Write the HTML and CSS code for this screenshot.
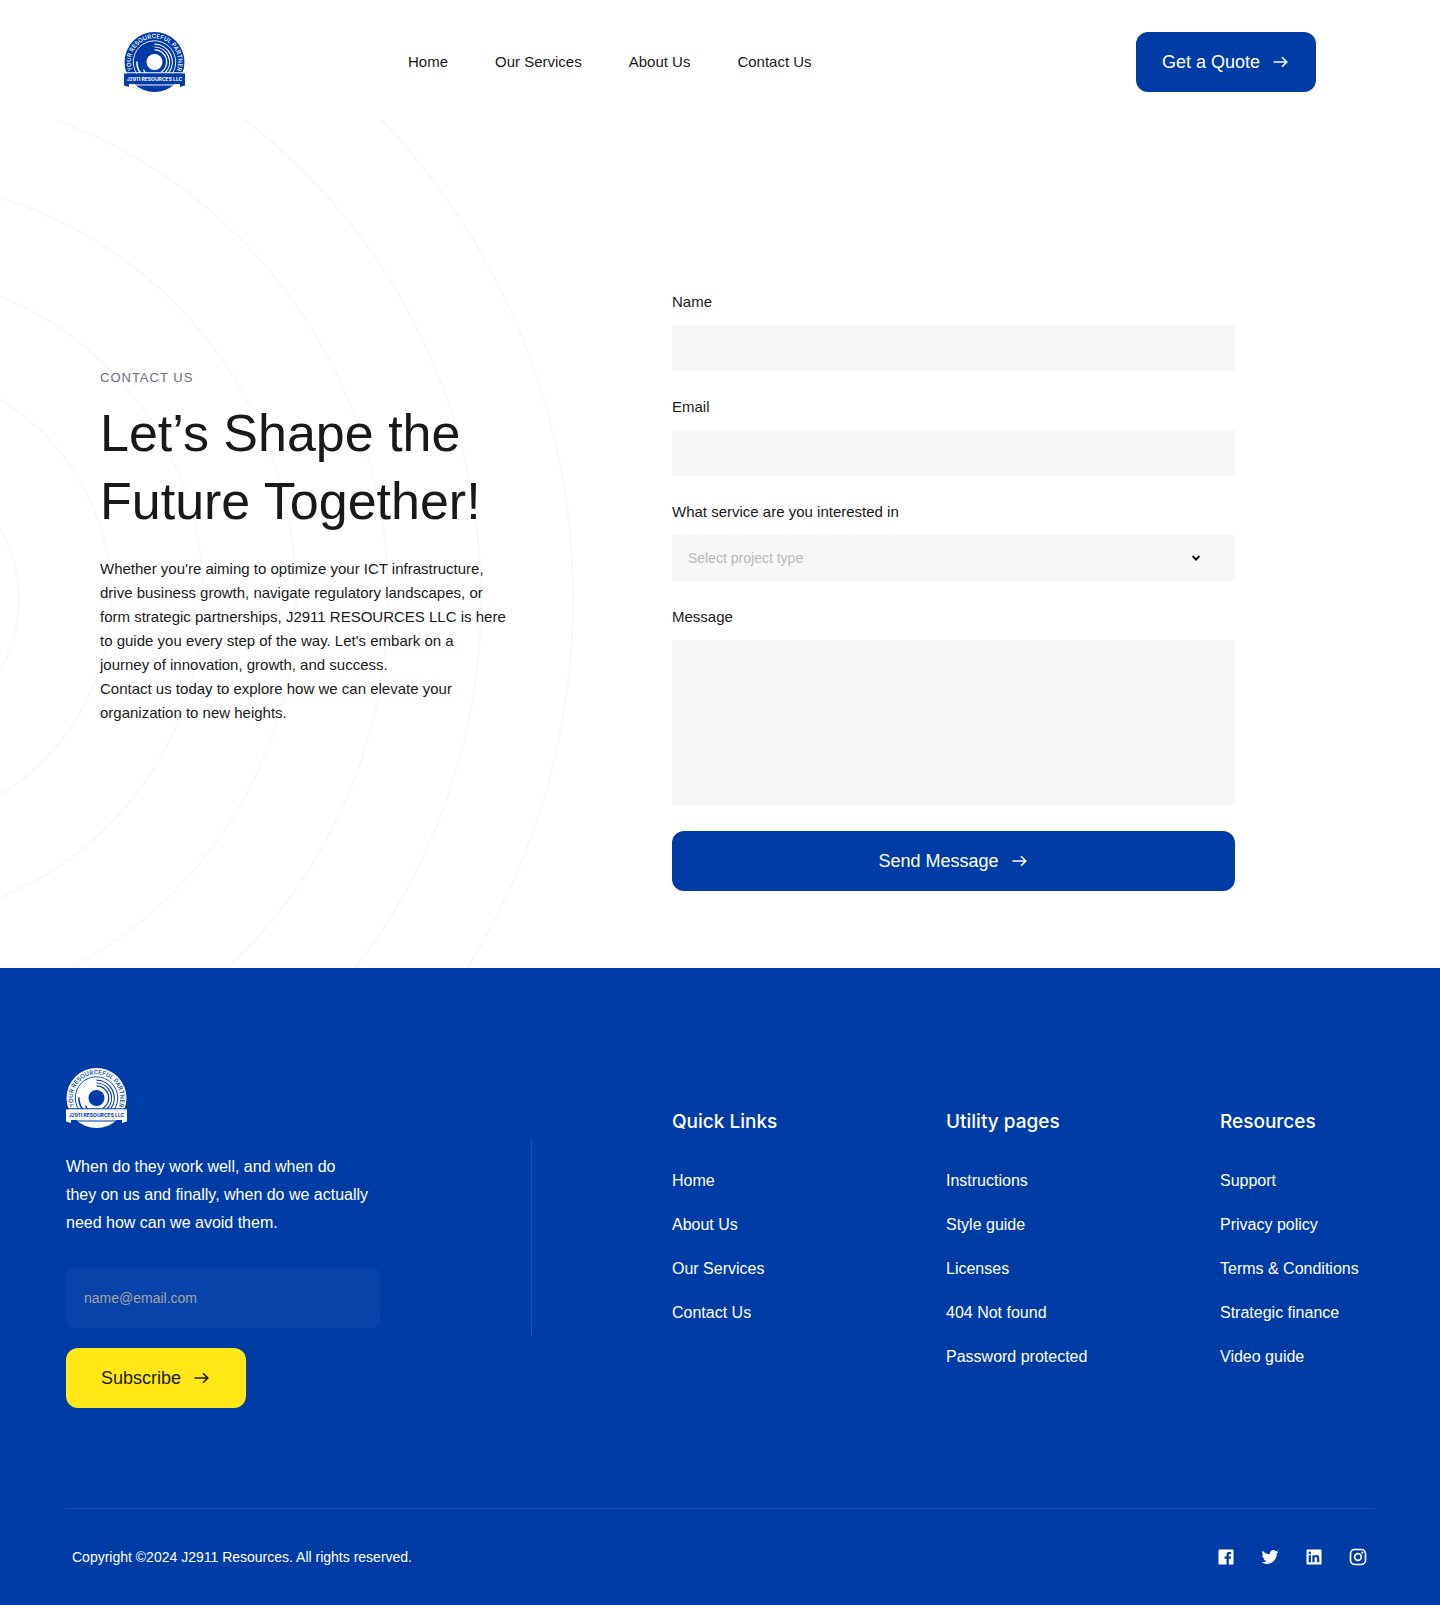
FILE: index.html
```html
<!DOCTYPE html>
<html lang="en">
<head>
<meta charset="utf-8">
<meta name="viewport" content="width=device-width, initial-scale=1">
<title>Contact Us – J2911 Resources LLC</title>
<link rel="stylesheet" href="styles.css">
</head>
<body>
<svg class="sprite" aria-hidden="true">
  <symbol id="arrow" viewBox="0 0 18 18">
    <path d="M1.500 9h13M10 4.200 14.800 9 10 13.800" fill="none" stroke="currentColor" stroke-width="1.600"/>
  </symbol>
  <symbol id="logo-rings" viewBox="0 0 61 60">
    <circle class="logo-main" cx="30.500" cy="30" r="30"/>
    <g class="logo-line">
      <circle cx="30.500" cy="30" r="21.200" stroke-width=".9"/>
      <path d="M30.500 12.200A17.800 17.800 0 0 1 44.500 41" stroke-width="1.200"/>
      <path d="M30.500 15A15 15 0 0 1 41.300 40.500" stroke-width="1.200"/>
      <path d="M30.500 17.900A12.100 12.100 0 0 1 37 40.300" stroke-width="1.200"/>
      <path d="M12.900 29.500A17.600 17.600 0 0 0 16.500 41" stroke-width="1.500"/>
      <path d="M19.500 37.500A13 13 0 0 0 21.500 41" stroke-width="1.200"/>
    </g>
    <circle class="logo-hub" cx="30.500" cy="30" r="8"/>
    <path class="logo-hub" d="M0 40.300h61v1.200H0zM5 52.500h51v1H5z"/>
    <path class="logo-main" d="M0 41.500h61v12l-5 1.500v-3H5v3l-5-1.500z"/>
  </symbol>
</svg>

<header class="site-header">
  <div class="header-inner">
    <a class="brand" href="#" aria-label="J2911 Resources home">
      <svg class="logo" viewBox="0 0 61 60">
        <use href="#logo-rings" width="61" height="60"/>
        <path id="arc-header" d="M10.400 42.500A23.700 23.700 0 1 1 50.600 42.500" fill="none"/>
        <text class="logo-motto"><textPath href="#arc-header" startOffset="50%" text-anchor="middle">YOUR RESOURCEFUL PARTNER</textPath></text>
        <text class="logo-name" x="30.500" y="48.700" text-anchor="middle">J2911 RESOURCES LLC</text>
      </svg>
    </a>
    <nav class="main-nav" aria-label="Main">
      <a href="#">Home</a>
      <a href="#">Our Services</a>
      <a href="#">About Us</a>
      <a href="#">Contact Us</a>
    </nav>
    <a class="button" href="#">Get a Quote <svg class="arrow"><use href="#arrow"/></svg></a>
  </div>
</header>

<main class="contact">
  <svg class="rings" viewBox="0 0 576 848" aria-hidden="true">
    <g fill="none" stroke="#f8f8f8" stroke-width="2">
      <circle cx="-123" cy="479" r="142"/>
      <circle cx="-121" cy="477" r="232"/>
      <circle cx="-121" cy="477" r="324"/>
      <circle cx="-121" cy="477" r="417"/>
      <circle cx="-121" cy="477" r="509"/>
      <circle cx="-123" cy="479" r="604"/>
      <circle cx="-123" cy="479" r="696"/>
    </g>
  </svg>
  <section class="intro">
    <p class="eyebrow">CONTACT US</p>
    <h1>Let’s Shape the Future Together!</h1>
    <p class="lead">Whether you're aiming to optimize your ICT infrastructure, drive business growth, navigate regulatory landscapes, or form strategic partnerships, J2911 RESOURCES LLC is here to guide you every step of the way. Let's embark on a<br>journey of innovation, growth, and success.<br>Contact us today to explore how we can elevate your<br>organization to new heights.</p>
  </section>
  <form class="contact-form">
    <div class="field">
      <label for="name">Name</label>
      <input id="name" type="text">
    </div>
    <div class="field">
      <label for="email">Email</label>
      <input id="email" type="email">
    </div>
    <div class="field">
      <label for="service">What service are you interested in</label>
      <div class="select">
        <select id="service"><option>Select project type</option></select>
        <svg class="chevron" viewBox="0 0 10 10" aria-hidden="true"><path d="M1.500 3 5 6.500 8.500 3" fill="none" stroke="#111" stroke-width="2"/></svg>
      </div>
    </div>
    <div class="field">
      <label for="message">Message</label>
      <textarea id="message"></textarea>
    </div>
    <button class="button" type="submit">Send Message <svg class="arrow"><use href="#arrow"/></svg></button>
  </form>
</main>

<footer class="site-footer">
  <div class="footer-top">
    <div class="footer-brand">
      <a class="brand inverse" href="#" aria-label="J2911 Resources home">
        <svg class="logo" viewBox="0 0 61 60">
          <use href="#logo-rings" width="61" height="60"/>
          <path id="arc-footer" d="M10.400 42.500A23.700 23.700 0 1 1 50.600 42.500" fill="none"/>
          <text class="logo-motto"><textPath href="#arc-footer" startOffset="50%" text-anchor="middle">YOUR RESOURCEFUL PARTNER</textPath></text>
          <text class="logo-name" x="30.500" y="48.700" text-anchor="middle">J2911 RESOURCES LLC</text>
        </svg>
      </a>
      <p>When do they work well, and when do<br>they on us and finally, when do we actually<br>need how can we avoid them.</p>
      <form class="subscribe">
        <input type="email" placeholder="name@email.com" aria-label="Email address">
        <button class="button accent" type="submit">Subscribe <svg class="arrow"><use href="#arrow"/></svg></button>
      </form>
    </div>
    <div class="divider"></div>
    <nav class="links" aria-label="Footer">
      <div>
        <h2>Quick Links</h2>
        <ul>
          <li><a href="#">Home</a></li>
          <li><a href="#">About Us</a></li>
          <li><a href="#">Our Services</a></li>
          <li><a href="#">Contact Us</a></li>
        </ul>
      </div>
      <div>
        <h2>Utility pages</h2>
        <ul>
          <li><a href="#">Instructions</a></li>
          <li><a href="#">Style guide</a></li>
          <li><a href="#">Licenses</a></li>
          <li><a href="#">404 Not found</a></li>
          <li><a href="#">Password protected</a></li>
        </ul>
      </div>
      <div>
        <h2>Resources</h2>
        <ul>
          <li><a href="#">Support</a></li>
          <li><a href="#">Privacy policy</a></li>
          <li><a href="#">Terms &amp; Conditions</a></li>
          <li><a href="#">Strategic finance</a></li>
          <li><a href="#">Video guide</a></li>
        </ul>
      </div>
    </nav>
  </div>
  <div class="footer-bottom">
    <p>Copyright ©2024 J2911 Resources. All rights reserved.</p>
    <div class="social">
      <a href="#" aria-label="Facebook"><svg viewBox="0 0 24 24"><path d="M15.402 21v-6.966h2.333l.349-2.708h-2.682V9.598c0-.784.218-1.319 1.342-1.319h1.434V5.857a19.190 19.190 0 0 0-2.090-.107c-2.067 0-3.482 1.262-3.482 3.580v1.996h-2.338v2.708h2.338V21H4a1 1 0 0 1-1-1V4a1 1 0 0 1 1-1h16a1 1 0 0 1 1 1v16a1 1 0 0 1-1 1z"/></svg></a>
      <a href="#" aria-label="Twitter"><svg viewBox="0 0 24 24"><path d="M22.162 5.656a8.384 8.384 0 0 1-2.402.658A4.196 4.196 0 0 0 21.600 4c-.82.488-1.719.83-2.656 1.015a4.182 4.182 0 0 0-7.126 3.814 11.874 11.874 0 0 1-8.620-4.370 4.168 4.168 0 0 0-.566 2.103c0 1.450.738 2.731 1.860 3.481a4.168 4.168 0 0 1-1.894-.523v.052a4.185 4.185 0 0 0 3.355 4.101 4.210 4.210 0 0 1-1.890.072A4.185 4.185 0 0 0 7.970 16.650a8.394 8.394 0 0 1-6.191 1.732 11.830 11.830 0 0 0 6.410 1.880c7.693 0 11.900-6.373 11.900-11.900 0-.18-.005-.362-.013-.54a8.496 8.496 0 0 0 2.087-2.165z"/></svg></a>
      <a href="#" aria-label="LinkedIn"><svg viewBox="0 0 24 24"><path d="M18.335 18.339H15.670v-4.177c0-.996-.02-2.278-1.390-2.278-1.389 0-1.601 1.084-1.601 2.205v4.250h-2.666V9.750h2.560v1.170h.035c.358-.674 1.228-1.387 2.528-1.387 2.700 0 3.200 1.778 3.200 4.091v4.715zM7.003 8.575a1.546 1.546 0 0 1-1.548-1.549 1.548 1.548 0 1 1 1.547 1.549zm1.336 9.764H5.666V9.750H8.340v8.589zM19.670 3H4.329C3.593 3 3 3.580 3 4.297v15.406C3 20.420 3.594 21 4.328 21h15.338C20.400 21 21 20.420 21 19.703V4.297C21 3.580 20.400 3 19.666 3h.003z"/></svg></a>
      <a href="#" aria-label="Instagram"><svg viewBox="0 0 24 24"><g fill="none" stroke="currentColor" stroke-width="2"><rect x="3" y="3" width="18" height="18" rx="5"/><circle cx="12" cy="12" r="4"/></g><circle cx="17.250" cy="6.750" r="1.250"/></svg></a>
    </div>
  </div>
</footer>
</body>
</html>
```
FILE: styles.css
```css
:root {
  --blue: #003ca6;
  --ink: #18191b;
  --field: #f7f7f7;
  --font: "Liberation Sans", Arial, sans-serif;
}

* { box-sizing: border-box; }

body {
  margin: 0;
  background: #fff;
  color: var(--ink);
  font: 15px/24px var(--font);
}

h1, h2, p, ul { margin: 0; padding: 0; font-weight: 400; }
ul { list-style: none; }
a { color: inherit; text-decoration: none; }
svg { display: block; }
input, select, textarea, button { font: inherit; color: inherit; border: 0; }

.sprite { position: absolute; width: 0; height: 0; }

.brand { --logo-main: var(--blue); --logo-cut: #fff; width: 61px; }
.brand.inverse { --logo-main: #fafbff; --logo-cut: var(--blue); }
.logo { width: 61px; height: 60px; overflow: visible; }
.logo-main { fill: var(--logo-main); }
.logo-hub { fill: var(--logo-cut); }
.logo-line { fill: none; stroke: var(--logo-cut); }
.logo-motto { fill: var(--logo-cut); font: 500 6px/1 Inter, sans-serif; }
.logo-name { fill: var(--logo-cut); font: 700 5px/1 Inter, sans-serif; }

.button {
  display: flex;
  align-items: center;
  justify-content: center;
  gap: 12px;
  height: 60px;
  min-width: 180px;
  border-radius: 12px;
  background: var(--blue);
  color: #fff;
  font-size: 18px;
  cursor: pointer;
}
.button.accent { background: #ffe815; color: var(--ink); }
.arrow { width: 18px; height: 18px; }

/* Header */
.header-inner {
  display: grid;
  grid-template-columns: 284px 1fr auto;
  align-items: center;
  max-width: 1192px;
  height: 120px;
  margin: 0 auto;
  padding-top: 4px;
}
.main-nav { display: flex; gap: 47px; }

/* Contact section */
.contact {
  position: relative;
  display: grid;
  grid-template-columns: 572fr 563fr;
  max-width: 1440px;
  margin: 0 auto;
  padding: 168px 205px 77px 100px;
}
.rings {
  position: absolute;
  top: 0;
  left: 0;
  height: 100%;
  z-index: -1;
}
.intro { max-width: 412px; padding-top: 78px; }
.eyebrow { color: #6e6d7a; font-size: 13px; letter-spacing: 1px; }
.intro h1 { margin: 9px 0 22px; font-size: 52px; line-height: 68px; }

.contact-form { display: grid; }
.field { display: grid; gap: 10px; padding-bottom: 22px; }
.field label { height: 27px; line-height: 27px; }
.field input, .field select, .field textarea {
  width: 100%;
  height: 46px;
  padding: 0 16px;
  border-radius: 0;
  background: var(--field);
}
.field textarea { display: block; height: 165px; padding: 12px 16px; margin-bottom: 4px; resize: none; }
.field select { appearance: none; color: #b9b9b9; font-size: 14px; }
.select { position: relative; }
.chevron {
  position: absolute;
  top: 18px;
  right: 34px;
  width: 10px;
  height: 10px;
  pointer-events: none;
}

/* Footer */
.site-footer {
  padding: 100px 66px 0;
  background: var(--blue);
  color: #fff;
  font-size: 16px;
}
.footer-top {
  display: grid;
  grid-template-columns: 465fr 141fr 702fr;
  max-width: 1308px;
  margin: 0 auto;
  padding-bottom: 100px;
}
.footer-brand p { margin: 25px 0 31px; line-height: 28px; }
.subscribe { display: grid; justify-items: start; gap: 20px; }
.subscribe input {
  width: 314px;
  height: 60px;
  padding: 0 18px;
  border-radius: 8px;
  background: #0843a9;
  font-size: 14px;
}
.subscribe input::placeholder { color: #a3a3a3; opacity: 1; }
.divider { width: 1px; height: 200px; margin-top: 70px; background: #1a50af; }
.links { display: grid; grid-template-columns: 274fr 274fr 154fr; padding-top: 40px; }
.links h2 { margin-bottom: 23px; font: 500 19px/28px Inter, sans-serif; }
.links li { height: 44px; line-height: 44px; white-space: nowrap; }

.footer-bottom {
  display: flex;
  align-items: center;
  justify-content: space-between;
  max-width: 1308px;
  height: 97px;
  margin: 0 auto;
  padding: 0 6px;
  border-top: 1px solid #1a50af;
  font-size: 14px;
}
.social { display: flex; gap: 24px; }
.social svg { width: 20px; height: 20px; fill: currentColor; }
```
